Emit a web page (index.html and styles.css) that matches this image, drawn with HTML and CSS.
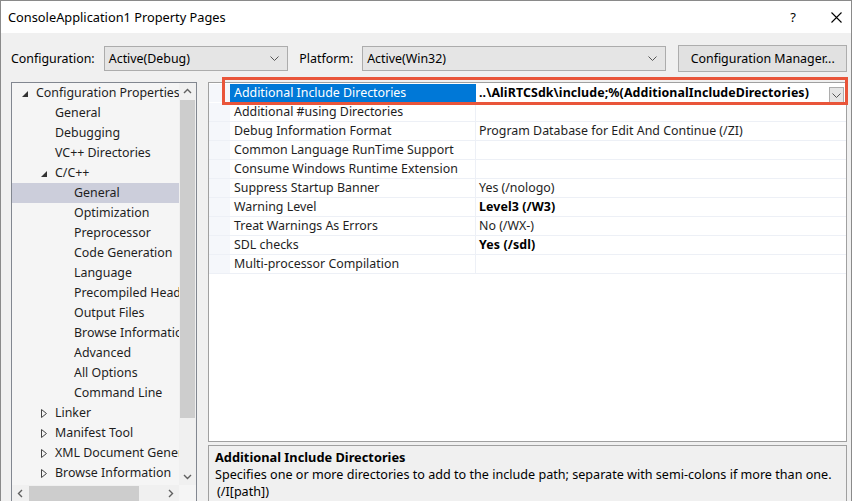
FILE: index.html
```html
<!DOCTYPE html>
<html>
<head>
<meta charset="utf-8">
<link rel="stylesheet" href="styles.css">
</head>
<body>
<div class="window">
  <div class="titlebar">
    <span class="title">ConsoleApplication1 Property Pages</span>
    <span class="tb-help">?</span>
    <svg class="tb-close" width="11" height="11" viewBox="0 0 11 11"><path d="M0.5 0.5L10.5 10.5M10.5 0.5L0.5 10.5" stroke="#000" stroke-width="1.1" fill="none"/></svg>
  </div>
  <div class="content">
    <div class="config-row">
      <span class="lbl lbl-config">Configuration:</span>
      <div class="combo combo-config"><span>Active(Debug)</span><svg class="chev" width="9" height="5" viewBox="0 0 9 5"><path d="M0.5 0.5L4.5 4.5L8.5 0.5" stroke="#555" fill="none"/></svg></div>
      <span class="lbl lbl-platform">Platform:</span>
      <div class="combo combo-platform"><span>Active(Win32)</span><svg class="chev" width="9" height="5" viewBox="0 0 9 5"><path d="M0.5 0.5L4.5 4.5L8.5 0.5" stroke="#555" fill="none"/></svg></div>
      <div class="button">Configuration Manager...</div>
    </div>
    <div class="main">
      <div class="tree">
        <div class="tree-top">
          <div class="tree-items">
            <div class="ti l0"><span class="tri-exp"></span>Configuration Properties</div>
            <div class="ti l1">General</div>
            <div class="ti l1">Debugging</div>
            <div class="ti l1">VC++ Directories</div>
            <div class="ti l1x"><span class="tri-exp"></span>C/C++</div>
            <div class="ti l2 sel">General</div>
            <div class="ti l2">Optimization</div>
            <div class="ti l2">Preprocessor</div>
            <div class="ti l2">Code Generation</div>
            <div class="ti l2">Language</div>
            <div class="ti l2">Precompiled Headers</div>
            <div class="ti l2">Output Files</div>
            <div class="ti l2">Browse Information</div>
            <div class="ti l2">Advanced</div>
            <div class="ti l2">All Options</div>
            <div class="ti l2">Command Line</div>
            <div class="ti l1x"><svg class="tri-col" width="6" height="9" viewBox="0 0 6 9"><path d="M0.5 0.5L5.5 4.5L0.5 8.5Z" stroke="#444" fill="none"/></svg>Linker</div>
            <div class="ti l1x"><svg class="tri-col" width="6" height="9" viewBox="0 0 6 9"><path d="M0.5 0.5L5.5 4.5L0.5 8.5Z" stroke="#444" fill="none"/></svg>Manifest Tool</div>
            <div class="ti l1x"><svg class="tri-col" width="6" height="9" viewBox="0 0 6 9"><path d="M0.5 0.5L5.5 4.5L0.5 8.5Z" stroke="#444" fill="none"/></svg>XML Document Generator</div>
            <div class="ti l1x"><svg class="tri-col" width="6" height="9" viewBox="0 0 6 9"><path d="M0.5 0.5L5.5 4.5L0.5 8.5Z" stroke="#444" fill="none"/></svg>Browse Information</div>
          </div>
          <div class="vscroll">
            <svg class="sarrow" width="17" height="17" viewBox="0 0 17 17"><path d="M5 10L8.5 6.5L12 10" stroke="#606060" stroke-width="1.4" fill="none"/></svg>
            <div class="vthumb"></div>
            <div class="vtrack"></div>
            <svg class="sarrow" width="17" height="17" viewBox="0 0 17 17"><path d="M5 7L8.5 10.5L12 7" stroke="#606060" stroke-width="1.4" fill="none"/></svg>
          </div>
        </div>
        <div class="hscroll">
          <svg class="sarrow" width="17" height="17" viewBox="0 0 17 17"><path d="M10 5L6.5 8.5L10 12" stroke="#606060" stroke-width="1.4" fill="none"/></svg>
          <div class="hthumb"></div>
          <div class="htrack"></div>
          <svg class="sarrow" width="17" height="17" viewBox="0 0 17 17"><path d="M7 5L10.5 8.5L7 12" stroke="#606060" stroke-width="1.4" fill="none"/></svg>
          <div class="corner"></div>
        </div>
      </div>
      <div class="right">
        <div class="grid">
          <div class="rows">
            <div class="row selrow"><div class="gut"></div><div class="name">Additional Include Directories</div><div class="val bold">..\AliRTCSdk\include;%(AdditionalIncludeDirectories)<span class="dd"><svg width="9" height="5" viewBox="0 0 9 5"><path d="M0.5 0.5L4.5 4.5L8.5 0.5" stroke="#555" fill="none"/></svg></span></div></div>
            <div class="row"><div class="gut"></div><div class="name">Additional #using Directories</div><div class="val"></div></div>
            <div class="row"><div class="gut"></div><div class="name">Debug Information Format</div><div class="val">Program Database for Edit And Continue (/ZI)</div></div>
            <div class="row"><div class="gut"></div><div class="name">Common Language RunTime Support</div><div class="val"></div></div>
            <div class="row"><div class="gut"></div><div class="name">Consume Windows Runtime Extension</div><div class="val"></div></div>
            <div class="row"><div class="gut"></div><div class="name">Suppress Startup Banner</div><div class="val">Yes (/nologo)</div></div>
            <div class="row"><div class="gut"></div><div class="name">Warning Level</div><div class="val bold">Level3 (/W3)</div></div>
            <div class="row"><div class="gut"></div><div class="name">Treat Warnings As Errors</div><div class="val">No (/WX-)</div></div>
            <div class="row"><div class="gut"></div><div class="name">SDL checks</div><div class="val bold">Yes (/sdl)</div></div>
            <div class="row"><div class="gut"></div><div class="name">Multi-processor Compilation</div><div class="val"></div></div>
          </div>
        </div>
        <div class="desc">
          <div class="desc-title">Additional Include Directories</div>
          <div class="desc-text">Specifies one or more directories to add to the include path; separate with semi-colons if more than one.</div>
          <div class="desc-text desc-sw">(/I[path])</div>
        </div>
      </div>
    </div>
  </div>
  <div class="highlight"></div>
</div>
</body>
</html>
```
FILE: styles.css
```css
* { box-sizing: border-box; }
html, body { margin: 0; padding: 0; }
body {
  width: 852px; height: 501px; overflow: hidden;
  font-family: "Noto Sans", "Liberation Sans", sans-serif;
  font-size: 12.4px; color: #000;
}
.window {
  position: relative;
  width: 852px; height: 501px;
  border: 1px solid #8a8a8a;
  border-bottom: none;
  display: flex; flex-direction: column;
  background: #f0f0f0;
  overflow: hidden;
}
.titlebar {
  height: 32px; flex: none;
  background: #fff;
  display: flex; align-items: center;
  padding-left: 7px;
}
.title { font-size: 12.8px; flex: 1; }
.tb-help { width: 20px; text-align: center; font-size: 13px; margin-right: 28px; }
.tb-close { margin-right: 9px; }
.content {
  flex: 1;
  padding: 12px 4px 0 10px;
  display: flex; flex-direction: column;
  min-height: 0;
}
.config-row {
  height: 27px; flex: none;
  display: flex; align-items: center;
}
.lbl-config { width: 93px; }
.lbl-platform { width: 63px; margin-left: 11px; }
.combo {
  height: 25px;
  background: #e5e5e5;
  border: 1px solid #acacac;
  display: flex; align-items: center; justify-content: space-between;
  padding: 0 8px 0 4px;
}
.combo-config { width: 185px; }
.combo-platform { width: 305px; }
.button {
  margin-left: 12px;
  width: 169px; height: 27px;
  background: #e1e1e1;
  border: 1px solid #adadad;
  display: flex; align-items: center; justify-content: center;
}
.main {
  flex: 1; min-height: 0;
  margin-top: 10px;
  display: flex; gap: 11px;
}
.tree {
  width: 186px;
  height: 424px; flex: none;
  border: 1px solid #828790;
  background: #f5f5f5;
  display: flex; flex-direction: column;
}
.tree-top { display: flex; height: 402px; flex: none; }
.tree-items { flex: 1; overflow: hidden; white-space: nowrap; color: #1e1e1e; }
.ti { height: 20px; line-height: 20px; display: flex; align-items: center; }
.l0 { padding-left: 10px; }
.l1 { padding-left: 43px; }
.l1x { padding-left: 29px; }
.l2 { padding-left: 62px; }
.sel { background: #cccedb; }
.tri-exp {
  width: 0; height: 0; flex: none;
  border-style: solid; border-width: 0 0 6px 6px;
  border-color: transparent transparent #333 transparent;
  margin-right: 8px; margin-top: 1px;
}
.tri-col { flex: none; margin-right: 8px; margin-top: 1px; display: block; }
.vscroll {
  width: 17px; flex: none;
  background: #f0f0f0;
  display: flex; flex-direction: column;
}
.sarrow { flex: none; display: block; }
.vthumb { height: 318px; margin: 0 1px; background: #cdcdcd; flex: none; }
.vtrack { flex: 1; }
.hscroll {
  height: 17px; flex: none;
  display: flex; background: #f0f0f0;
}
.hthumb { width: 110px; margin: 1px 0; background: #cdcdcd; }
.htrack { flex: 1; }
.corner { width: 17px; background: #f5f5f5; }
.right {
  flex: 1; min-width: 0;
  display: flex; flex-direction: column; gap: 3px;
}
.grid {
  height: 360px; flex: none;
  border: 1px solid #a0a0a0;
  background: #fff;
  padding-top: 1px;
}
.rows { background: #f5f7fb; }
.row {
  height: 19px;
  display: flex;
  border-bottom: 1px solid #edf0f6;
}
.gut { width: 21px; flex: none; background: #f5f7fb; }
.name {
  width: 246px; flex: none;
  background: #fff;
  padding-left: 4px;
  line-height: 18px;
  border-right: 1px solid #edf0f6;
  white-space: nowrap; color: #1e1e1e;
}
.val {
  flex: 1; background: #fff;
  padding-left: 3px; line-height: 18px;
  white-space: nowrap; position: relative; color: #1e1e1e;
}
.bold { font-weight: bold; color: #000; letter-spacing: 0.1px; }
.selrow .name { background: #0078d7; color: #fff; border-right: none; }
.selrow { border-bottom-color: #fff; }
.dd {
  position: absolute; right: 2px; top: 3px;
  width: 15px; height: 16px;
  background: #e5e5e5; border: 1px solid #adadad;
  display: flex; align-items: center; justify-content: center;
}
.desc {
  flex: 1;
  border: 1px solid #a0a0a0;
  border-bottom: none;
  padding: 2px 0 0 6px;
  background: #f0f0f0;
  line-height: 18px;
  white-space: nowrap;
  overflow: hidden;
}
.desc-title { font-weight: bold; font-size: 12.8px; }
.desc-text { font-size: 12.6px; }
.desc-sw { padding-left: 2px; line-height: 16px; }
.highlight {
  position: absolute;
  left: 221px; top: 76px;
  width: 626px; height: 28px;
  border: 3px solid #e9553a;
}
```
